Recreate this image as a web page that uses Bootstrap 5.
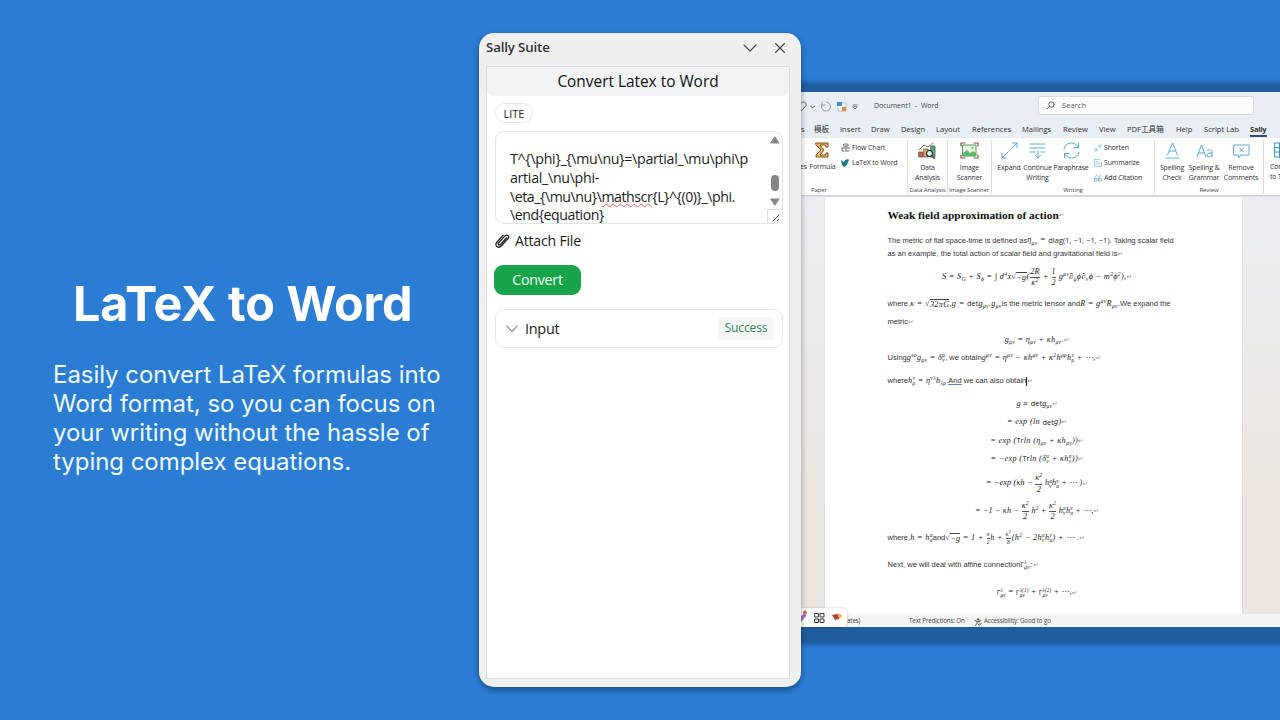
<!DOCTYPE html>
<html lang="en">
<head>
<meta charset="utf-8">
<meta name="viewport" content="width=device-width, initial-scale=1">
<title>LaTeX to Word</title>
<link href="https://cdn.jsdelivr.net/npm/bootstrap@5.3.0/dist/css/bootstrap.min.css" rel="stylesheet">
<style>
body{width:1280px;height:720px;overflow:hidden;background:#2b7dd4;font-family:"Open Sans","Noto Sans CJK SC",sans-serif;color:#222}
.stage{display:grid;grid-template-columns:479px 322px 479px;height:720px;overflow:hidden}
svg{display:block;flex:none;fill:none;stroke-linecap:round;stroke-linejoin:round}
/* hero */
.hero{padding:274px 0 0 53px;font-family:Inter,sans-serif;color:#fff}
.hero h1{font-size:48.5px;font-weight:700;line-height:60px;margin:0 0 26px 20px;white-space:nowrap;letter-spacing:-.1px}
.hero p{font-size:24px;line-height:29px;white-space:nowrap;letter-spacing:-.04px;color:#eefaff;font-weight:400}
/* task pane */
.pane{z-index:2;margin-top:33px;height:654px;background:#efefef;border-radius:15px;padding:0 11px 0 7px;box-shadow:0 3px 6px rgba(0,0,0,.38)}
.pane-title{height:33px;padding:0 4px 3px 0;font-size:13.3px;font-weight:600;color:#333;letter-spacing:-.15px}
.pane-body{height:613px;background:#fff;border:1px solid #dcdcdc;font-size:14.5px;color:#1c1c1c}
.pane-head{height:29px;background:#f1f3f5;font-size:15.4px;color:#111;border-radius:0 0 6px 6px;line-height:29px}
.lite{margin:7px 0 0 8px;width:38px;height:20px;border:1px solid #e4e6e8;border-radius:10px;font-size:11px;line-height:19px}
.src{margin:8px 0 0 8px;width:288px;height:93px;border:1px solid #e3e4e6;border-radius:9px;padding:18px 0 0 14px;line-height:18.8px;overflow:hidden;white-space:pre;font-size:14.2px;letter-spacing:-.29px}
.src .bar{position:absolute;right:0;top:0;height:91px;width:15px}
.tight{letter-spacing:-.46px}
.spell{text-decoration:underline wavy #e35b5b 1px;text-underline-offset:1px}
.attach{margin:7px 0 0 8px;height:20px;gap:5px;font-size:14.2px;letter-spacing:-.25px}
.btn-go{margin:14px 0 0 7px;width:87px;height:30px;background:#18a34a;color:#effff4;border-radius:9px;font-size:14.3px;letter-spacing:-.3px;padding:0;line-height:30px}
.io{margin:14px 0 0 8px;width:288px;height:39px;border:1px solid #e5e7e9;border-radius:9px;padding:0 8px 0 10px;letter-spacing:-.3px}
.ok{width:56px;height:23px;background:#f3f5f6;border-radius:4px;color:#2f8a54;font-size:12px;line-height:22px;letter-spacing:-.1px}
/* Word window */
.win{margin-top:92px;height:535px;background:#e9edf4;box-shadow:0 4px 4px 14px #205c9e;overflow:visible;white-space:nowrap;font-size:7.2px;min-width:0}
.qat{height:29px;display:grid;grid-template-columns:8px 11px 16px 16px 22px 164px 216px;align-items:center;color:#444}
.find{height:19px;margin-bottom:2px;background:#fafbfc;border:1px solid #d9dde3;border-radius:2px;padding-left:7px;gap:7px;color:#666;font-size:7.6px}
.tabs{height:17px;line-height:17px;display:grid;grid-template-columns:13px 26px 31px 30px 35px 36px 50px 41px 36px 28px 49px 28px 46px 30px;font-size:7.6px;color:#333}
.tabs span{height:16px}
.tabs .now{width:17px;font-weight:700;border-bottom:2px solid #2c4a94;letter-spacing:-.3px}
.ribbon{height:57px;background:#fff;box-shadow:0 1px 2px rgba(0,0,0,.15);overflow:hidden;font-size:7px;letter-spacing:-.16px;line-height:9.5px;color:#333;position:relative}
.grp{height:54px;margin-top:2px;border-right:1px solid #dcdee2;flex:none}
.grp .tools{height:45px}
.grp .cap{font-size:6px;line-height:10px;height:10px;color:#444;letter-spacing:-.1px}
.tool{display:flex;flex-direction:column;align-items:center;text-align:center;flex:none;padding-top:2px}
.tool svg{margin-bottom:4px}
.opt{display:flex;align-items:center;gap:2px;height:15px}
.w28{width:28px}.w29{width:29px}.w32{width:32px}.w38{width:38px}.w42{width:42px}
.desk{height:417px;margin-top:2px;padding-left:24px;background:linear-gradient(#eceef3,#ece5df 75%)}
.sheet{width:417px;height:417px;background:#fff;padding-left:62.5px;font-family:"Liberation Sans",sans-serif;color:#333;font-size:7.5px;letter-spacing:.02px;display:grid;grid-template-columns:299px;grid-template-rows:36px 15px 11px 36px 18px 17px 20px 16px 30px 16px 21px 16px 20px 29px 26px 28px 26px 29px;align-items:center;line-height:1;box-shadow:0 0 1px #bbb}
.sheet>div{display:flex;align-items:center;white-space:pre}
.sheet>.eq{justify-content:center}
.sheet h2{font:700 11.35px "Liberation Serif",serif;margin:0;color:#111;letter-spacing:0}
.m{font-family:"Liberation Serif",serif;font-style:italic;font-size:8.2px;display:inline-flex;align-items:center;letter-spacing:.34px;color:#222}
.eq .m{letter-spacing:.14px}
.wide .m{letter-spacing:.34px}
.m i,.m b{font-size:5.6px;line-height:5px;font-weight:400}
.m i{margin-top:5px}.m b{margin-top:-5px;font-style:italic}
.m u{text-decoration:none;display:inline-flex;flex-direction:column;font-size:5.2px;line-height:4.8px}
.m s{text-decoration:none;display:inline-flex;flex-direction:column;text-align:center;margin:0 .5px}
.m s>span:first-child{border-bottom:.8px solid #555;padding-bottom:1px}
.m s>span{display:block;padding-top:1px}
.m s b{position:relative;top:-3px}
.m s.tiny{font-size:5.5px}.m s.tiny b{font-size:4px}
.m em{font-style:normal;font-family:"Open Sans",sans-serif;font-size:7.4px;letter-spacing:.08px}
.m q{quotes:none;border-top:.8px solid #444;padding-top:.5px;line-height:8px}
.ret{color:#888;font:6.6px "DejaVu Sans",sans-serif;margin-left:0}
.caret-line{border-right:1px solid #222;height:9px}
.status{height:13px;background:#f3f3f3;font-size:6.2px;line-height:13px;display:grid;grid-template-columns:46px 62px 65px 10px 90px;color:#444;letter-spacing:-.12px;position:relative}
.dock{position:absolute;left:0;top:-6px;width:46px;height:19px;background:#fff;border-radius:0 5px 5px 0;box-shadow:0 0 3px rgba(0,0,0,.2)}
</style>
</head>
<body>
<main class="stage">
<section class="hero">
<h1>LaTeX to Word</h1>
<p>Easily convert LaTeX formulas into<br>Word format, so you can focus on<br>your writing without the hassle of<br>typing complex equations.</p>
</section>

<aside class="pane">
<header class="pane-title d-flex align-items-center"><span class="me-auto">Sally Suite</span>
<svg width="14" height="8" viewBox="0 0 14 8" stroke="#444" stroke-width="1.100"><path d="M1 1l6 6 6-6"/></svg>
<svg style="margin-left:17px" width="12" height="12" viewBox="0 0 12 12" stroke="#444" stroke-width="1.100"><path d="M1.500 1.500l9 9M10.500 1.500l-9 9"/></svg>
</header>
<div class="pane-body">
<div class="pane-head text-center">Convert Latex to Word</div>
<div class="lite text-center">LITE</div>
<div class="src position-relative">T^{\phi}_{\mu\nu}=\partial_\mu\phi\p
artial_\nu\phi-
<span class="tight">\eta_{\mu\nu}\<span class="spell">mathscr</span>{L}^{(0)}_\phi.</span>
<span class="tight">\end{equation}</span><svg class="bar" viewBox="0 0 15 91"><path d="M8 5l4 6H4zM4 67h8l-4 6z" fill="#858585" stroke="#858585"/><rect x="4" y="43" width="8" height="16" rx="4" fill="#858585"/><path d="M.5 91V77.500H15" stroke="#ddd"/><path d="M6 89l6-6M10 89l2-2" stroke="#555"/></svg></div>
<div class="attach d-flex align-items-center"><svg width="15" height="16" viewBox="0 0 15 16" stroke="#222" stroke-width="1.300"><path d="M11.500 5l-5.800 6.300c-1.500 1.600-3.300-.1-1.900-1.700l5.900-6.500c2.500-2.600 5.300.2 3 2.800l-6.200 6.900C3.200 16-.9 12.700 1.800 9.300L8 2.400"/></svg><span>Attach File</span></div>
<button class="btn btn-go d-block border-0">Convert</button>
<div class="io d-flex align-items-center"><svg width="12" height="8" viewBox="0 0 12 8" stroke="#999" stroke-width="1.300"><path d="M1 1l5 5.500L11 1"/></svg><span class="me-auto" style="margin-left:7px">Input</span><span class="ok text-center">Success</span></div>
</div>
</aside>

<section class="win">
<div class="qat">
<svg width="7" height="12" viewBox="0 0 7 12" stroke="#666"><path d="M0 2c4-3 7 1 4 4L0 10"/></svg>
<svg width="6" height="4" viewBox="0 0 6 4" stroke="#555"><path d="M1.500 1L3.500 3l2-2"/></svg>
<svg width="11" height="11" viewBox="0 0 11 11" stroke="#999"><path d="M2 1v3h3M7 1.200A4.500 4.500 0 1 1 2 3.500"/></svg>
<svg width="11" height="10" viewBox="0 0 11 10"><path d="M6 1h4v8H2V5" fill="#fff" stroke="#aab" stroke-width=".8"/><path d="M1 0h5v4H1z" fill="#3d8fdb"/><path d="M6 5h4v4H6z" fill="#e78b3c"/></svg>
<svg width="6" height="6" viewBox="0 0 6 6" stroke="#555" stroke-width=".7"><path d="M1 1h4M1 3l2 2 2-2z"/></svg>
<span style="font-size:6.9px">Document1 &nbsp;- &nbsp;Word</span>
<div class="find d-flex align-items-center"><svg width="9" height="9" viewBox="0 0 9 9" stroke="#555" stroke-width=".9"><circle cx="5.500" cy="3.500" r="2.700"/><path d="M3.500 5.500L1 8"/></svg>Search</div>
</div>
<nav class="tabs"><span>s</span><span>模板</span><span>Insert</span><span>Draw</span><span>Design</span><span>Layout</span><span>References</span><span>Mailings</span><span>Review</span><span>View</span><span>PDF工具箱</span><span>Help</span><span>Script Lab</span><span class="now">Sally</span></nav>

<div class="ribbon d-flex">
<div class="grp" style="width:107px">
<div class="tools d-flex"><div class="tool" style="width:5px;padding-top:22px">es</div>
<div class="tool w32"><svg width="14" height="16" viewBox="0 0 14 16"><path d="M1 1h12v4h-2l-1-2H5l4 5-4 5h5l1-2h2v4H1v-2l5-5-5-5z" fill="#f2b54b" stroke="#5d4a2c" stroke-width=".9"/></svg><span style="padding-left:1px">Formula</span></div>
<div style="margin-left:3px"><div class="opt"><svg width="9" height="10" viewBox="0 0 9 10" stroke="#555" stroke-width=".8"><path d="M3 1h4v2H3zM1 5h7M5 3v5M1 5v3h2M5 8h3M8 5v1"/></svg>Flow Chart</div>
<div class="opt"><svg width="9" height="8" viewBox="0 0 9 8"><path d="M0 1l3 2 1-2 3-1 1 1-1 2-1 3-3 2-2-2z" fill="#1c7f8c"/></svg>LaTeX to Word</div></div></div>
<div class="cap" style="padding-left:10px">Paper</div></div>

<div class="grp" style="width:40px"><div class="tools"><div class="tool"><svg width="19" height="17" viewBox="0 0 19 17" stroke="#555" stroke-width=".8"><path d="M1 10h4v5H1z" fill="#e2574c"/><path d="M6 7h4v8H6z" fill="#f2b54b"/><path d="M13 4h4v11h-4z" fill="#4caf6a"/><path d="M1 8l5-5 4 2 5-4"/><circle cx="11.500" cy="11.500" r="3" fill="#dff0fb" stroke="#223" stroke-width="1.100"/><path d="M14 14l2.500 2.500" stroke-width="1.500"/></svg>Data<br>Analysis</div></div><div class="cap text-center">Data Analysis</div></div>

<div class="grp" style="width:44px"><div class="tools"><div class="tool"><svg width="19" height="17" viewBox="0 0 19 17"><path d="M3 3h13v11H3z" fill="#e8f5e4" stroke="#4c9a5b"/><path d="M3 11l4-3 3 3 3-2 3 2v3H3z" fill="#63b56b"/><circle cx="12.500" cy="6" r="1" fill="#63b56b"/><path d="M1 4V1h4M14 1h4v3M1 13v3h4M14 16h4v-3" stroke="#8b4a45" stroke-width="1.200"/></svg>Image<br>Scanner</div></div><div class="cap text-center" style="margin-left:-1px">Image Scanner</div></div>

<div class="grp" style="width:163px"><div class="tools d-flex" style="padding-left:3px">
<div class="tool w28"><svg width="17" height="17" viewBox="0 0 17 17" stroke="#4a9fd0" stroke-width=".9"><path d="M10 7l6-6M11.500 1H16v4.500M7 10l-6 6M1 11.500V16h4.500"/></svg>Expand</div>
<div class="tool w29"><svg width="17" height="17" viewBox="0 0 17 17" stroke="#4a9fd0" stroke-width=".9"><path d="M1 2h15M1 6h15M1 10h5M12 10h4M9 9v7M6.500 13.500L9 16l2.500-2.500"/></svg>Continue<br>Writing</div>
<div class="tool w38"><svg width="17" height="17" viewBox="0 0 17 17" stroke="#4a9fd0" stroke-width=".9"><path d="M1 7a7.500 7.500 0 0 1 14-2M15.500 1v4.500H11M16 10a7.500 7.500 0 0 1-14 2M1.500 16v-4.500H6"/></svg><span style="letter-spacing:-.25px">Paraphrase</span></div>
<div style="margin-left:4px"><div class="opt"><svg width="8" height="8" viewBox="0 0 8 8" stroke="#6ab0d8" stroke-width=".8"><path d="M7.500.5L5 3M5 1v2h2M.5 7.500L3 5M1 5h2v2"/></svg>Shorten</div><div class="opt"><svg width="8" height="8" viewBox="0 0 8 8" stroke="#6ab0d8" stroke-width=".7"><path d="M.5.5h5M.5.5v7h7V3M2 3h3M2 5h4"/></svg>Summarize</div><div class="opt"><svg width="8" height="8" viewBox="0 0 8 8" stroke="#6ab0d8" stroke-width=".8"><path d="M3 1C1 1.500.5 3 .5 6M.5 4.500h2.500v2.500H.5zM7 1C5 1.500 4.800 3 4.800 6M4.800 4.500h2.500v2.500H4.800z"/></svg>Add Citation</div></div></div>
<div class="cap text-center">Writing</div></div>

<div class="grp" style="width:109px"><div class="tools d-flex" style="padding-left:1px">
<div class="tool w32"><svg width="15" height="17" viewBox="0 0 15 17" stroke="#4a9fd0" stroke-width=".9"><path d="M2.500 13l5-12 5 12M4.300 9h6.400M1 16h13"/></svg>Spelling<br>Check</div>
<div class="tool w32"><svg width="17" height="17" viewBox="0 0 17 17" stroke="#4a9fd0" stroke-width=".9"><path d="M1 15L5.500 3 10 15M2.600 11h5.800M11.500 8.500c2-1.500 4.500-.5 4.500 1.500v5M16 11c-3 0-5 .5-5 2.200 0 2.300 4 2.300 5 0"/></svg>Spelling &amp;<br>Grammar</div>
<div class="tool w42"><svg width="17" height="17" viewBox="0 0 17 17" stroke="#4a9fd0" stroke-width=".9"><path d="M1 3h15v10H8l-2.500 3v-3H1zM6.500 6l4 4M10.500 6l-4 4"/></svg>Remove<br>Comments</div></div>
<div class="cap text-center">Review</div></div>
<div class="tools" style="padding:4px 0 0 6px"><svg style="margin:0 0 4px 4px" width="16" height="16" viewBox="0 0 16 16" stroke="#3b8fc8"><path d="M1 1h14v14H1zM1 5.500h14M1 10h14M5.500 1v14M10 1v14"/></svg>Convert<br>to Table</div>
</div>

<div class="desk"><article class="sheet">
<div><h2>Weak field approximation of action</h2><span class="ret">↵</span></div>
<div>The metric of flat space-time is defined as<span class="m">η<i>μν</i> = <em>diag(1, −1, −1, −1)</em></span>. Taking scalar field</div>
<div>as an example, the total action of scalar field and gravitational field is<span class="ret">↵</span></div>
<div class="eq wide"><span class="m">S = S<i>G</i> + S<i>ϕ</i> = ∫ d<b>4</b>x√<q>−g</q>(<s><span>2R</span><span>κ<b>2</b></span></s> + <s><span>1</span><span>2</span></s> g<b>μν</b>∂<i>μ</i>ϕ∂<i>ν</i>ϕ − m<b>2</b>ϕ<b>2</b>),</span><span class="ret">↵</span></div>
<div>where,<span class="m">κ = √<q>32πG</q>,g = <em>det</em>g<i>μν</i>.g<i>μν</i></span>is the metric tensor and<span class="m">R = g<b>μν</b>R<i>μν</i></span>.We expand the</div>
<div>metric<span class="ret">↵</span></div>
<div class="eq wide"><span class="m">g<i>μν</i> = η<i>μν</i> + κh<i>μν</i>.</span><span class="ret">↵</span></div>
<div>Using<span class="m">g<b>νρ</b>g<i>ρν</i> = δ<u><span>μ</span><span>ν</span></u></span>, we obtain<span class="m">g<b>μν</b> = η<b>μν</b> − κh<b>μν</b> + κ<b>2</b>h<b>μρ</b>h<u><span>ν</span><span>ρ</span></u> + ⋯,</span><span class="ret">↵</span></div>
<div>where<span class="m">h<u><span>ν</span><span>ρ</span></u> = η<b>νλ</b>h<i>λρ</i></span>.<span style="border-bottom:1px solid #5b84d8">And</span> we can also obtain<span class="caret-line"></span><span class="ret">↵</span></div>
<div class="eq"><span class="m">g ≡ <em>det</em>g<i>μν</i></span><span class="ret">↵</span></div>
<div class="eq wide"><span class="m">= exp (ln <em>det</em>g)</span><span class="ret">↵</span></div>
<div class="eq wide"><span class="m">= exp (<em>Tr</em>ln (η<i>μν</i> + κh<i>μν</i>))</span><span class="ret">↵</span></div>
<div class="eq wide"><span class="m">= −exp (<em>Tr</em>ln (δ<u><span>α</span><span>ν</span></u> + κh<u><span>α</span><span>ν</span></u>))</span><span class="ret">↵</span></div>
<div class="eq"><span class="m">= −exp (κh − <s><span>κ<b>2</b></span><span>2</span></s> h<u><span>α</span><span>ν</span></u>h<u><span>ν</span><span>α</span></u> + ⋯ )</span><span class="ret">↵</span></div>
<div class="eq"><span class="m">= −1 − κh − <s><span>κ<b>2</b></span><span>2</span></s> h<b>2</b> + <s><span>κ<b>2</b></span><span>2</span></s> h<u><span>α</span><span>ν</span></u>h<u><span>ν</span><span>α</span></u> + ⋯,</span><span class="ret">↵</span></div>
<div>where,<span class="m">h = h<u><span>α</span><span>α</span></u></span>and<span class="m">√<q>−g</q> = 1 + <s class="tiny"><span>κ</span><span>2</span></s>h + <s class="tiny"><span>κ<b>2</b></span><span>8</span></s>(h<b>2</b> − 2h<u><span>α</span><span>ν</span></u>h<u><span>ν</span><span>α</span></u>) + ⋯ .</span><span class="ret">↵</span></div>
<div>Next, we will deal with affine connection<span class="m"><em>Γ</em><u><span>λ</span><span>μν</span></u>:</span><span class="ret">↵</span></div>
<div class="eq"><span class="m"><em>Γ</em><u><span>λ</span><span>μν</span></u> = <em>Γ</em><u><span>λ(1)</span><span>μν</span></u> + <em>Γ</em><u><span>λ(2)</span><span>μν</span></u> + ⋯,</span><span class="ret">↵</span></div>
</article></div>

<footer class="status"><span></span><span>ates)</span><span>Text Predictions: On</span><svg class="mt-1" width="8" height="8" viewBox="0 0 8 8" stroke="#444" stroke-width=".8"><circle cx="4" cy="1.300" r=".8"/><path d="M1 2.500l2 .8h2l2-.8M3 3.300v2L1.500 7.500M5 3.300V5M4 6l1.200 1.500L7.500 5"/></svg><span>Accessibility: Good to go</span>
<div class="dock d-flex align-items-center"><svg width="46" height="19" viewBox="0 0 46 19"><path d="M0 8l4-3 1 3-5 6z" fill="#9a72d8"/><circle cx="4" cy="4.500" r="2" fill="#e06a60"/><path d="M14 5.500h3.500V9H14zM19.500 5.500H23V9h-3.500zM14 11h3.500v3.500H14zM19.500 11H23v3.500h-3.500z" stroke="#333"/><path d="M31 7l5-1 4 1-2 4-4 1z" fill="#b4472f"/><circle cx="39" cy="8" r="2" fill="#f2b54b"/></svg></div>
</footer>
</section>
</main>
<script src="https://cdn.jsdelivr.net/npm/bootstrap@5.3.0/dist/js/bootstrap.bundle.min.js"></script>
</body>
</html>
